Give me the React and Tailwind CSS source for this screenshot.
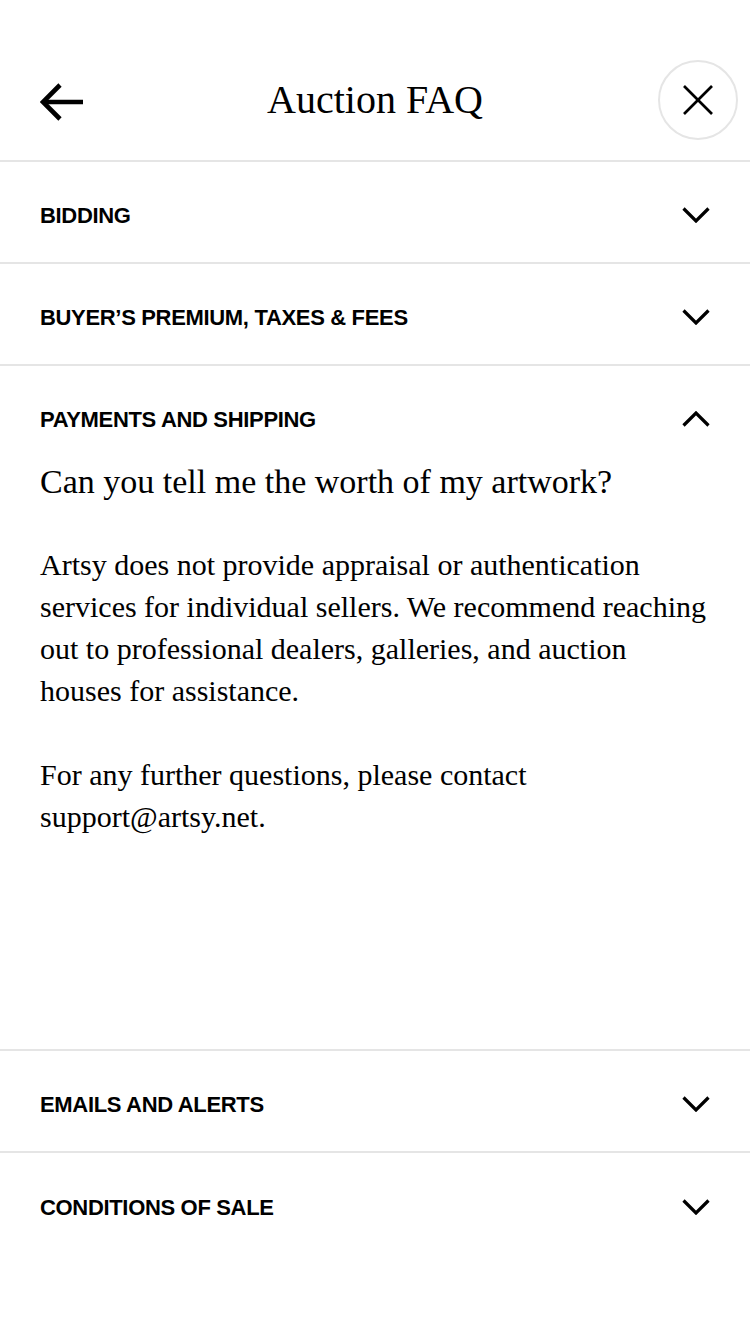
const serif = "font-['Liberation_Serif',serif]";
const sans = "font-['Liberation_Sans',Arial,sans-serif]";

function Chevron({ up = false }) {
  return (
    <svg width="28" height="16" viewBox="0 0 28 16" className="shrink-0">
      <polyline
        points={up ? "1.5,14.5 14,2 26.5,14.5" : "1.5,1.5 14,14 26.5,1.5"}
        fill="none"
        stroke="black"
        strokeWidth="3.2"
      />
    </svg>
  );
}

function Row({ label, last = false }) {
  return (
    <div
      className={`flex h-[102px] items-center justify-between pt-1.5 pr-[40px] pl-10 ${
        last ? "" : "border-b-2 border-[#e5e5e5]"
      }`}
    >
      <span className={`${sans} text-[22px] font-bold tracking-[-0.015em] text-black uppercase`}>
        {label}
      </span>
      <Chevron />
    </div>
  );
}

export default function App() {
  return (
    <div className="min-h-[1334px] w-[750px] bg-white">
      {/* Header */}
      <div className="flex h-[162px] items-center justify-between border-b-2 border-[#e5e5e5] pt-10 pr-3 pl-10">
        <svg width="44" height="38" viewBox="0 0 44 38" className="mt-1 shrink-0">
          <polyline points="20,2 3,19 20,36" fill="none" stroke="black" strokeWidth="4.6" />
          <line x1="3" y1="19" x2="43" y2="19" stroke="black" strokeWidth="4.6" />
        </svg>
        <h1 className={`${serif} pl-2 text-[40px] text-black`}>Auction FAQ</h1>
        <div className="flex h-20 w-20 shrink-0 items-center justify-center rounded-full border-2 border-[#e5e5e5]">
          <svg width="30" height="30" viewBox="0 0 30 30">
            <line x1="1" y1="1" x2="29" y2="29" stroke="black" strokeWidth="2.6" />
            <line x1="29" y1="1" x2="1" y2="29" stroke="black" strokeWidth="2.6" />
          </svg>
        </div>
      </div>

      <Row label="Bidding" />
      <Row label="Buyer’s Premium, Taxes & Fees" />

      {/* Expanded section */}
      <div className="border-b-2 border-[#e5e5e5] pt-[38px] pr-10 pb-[211px] pl-10">
        <div className="flex h-[30px] items-center justify-between">
          <span className={`${sans} text-[22px] font-bold tracking-[-0.015em] text-black uppercase`}>
            Payments and Shipping
          </span>
          <Chevron up />
        </div>
        <p className={`${serif} mt-[28px] text-[34px] leading-[40px] text-black`}>
          Can you tell me the worth of my artwork?
        </p>
        <div className={`${serif} mt-[42px] text-[30px] leading-[42px] whitespace-nowrap text-black`}>
          <p>
            Artsy does not provide appraisal or authentication
            <br />
            services for individual sellers. We recommend reaching
            <br />
            out to professional dealers, galleries, and auction
            <br />
            houses for assistance.
          </p>
          <p className="mt-[42px]">
            For any further questions, please contact
            <br />
            support@artsy.net.
          </p>
        </div>
      </div>

      <Row label="Emails and Alerts" />
      <Row label="Conditions of Sale" last />
    </div>
  );
}
